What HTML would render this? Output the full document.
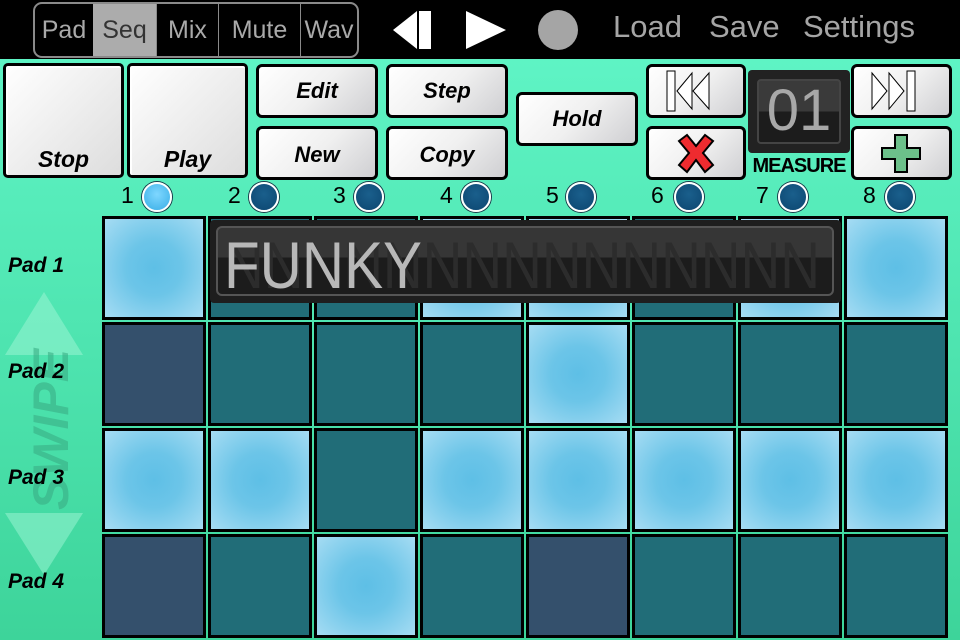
<!DOCTYPE html>
<html><head><meta charset="utf-8"><style>
*{margin:0;padding:0;box-sizing:border-box}
body{width:960px;height:640px;overflow:hidden;position:relative;font-family:"Liberation Sans",sans-serif;background:linear-gradient(#62f7c9,#3dd49a)}
.top{position:absolute;left:0;top:0;width:960px;height:59px;background:#000}
.seg{position:absolute;left:33px;top:2px;width:326px;height:56px;border:2px solid #8a8a8a;border-radius:9px;overflow:hidden;display:flex}
.seg div{color:#a9a9a9;font-size:25px;line-height:52px;text-align:center;border-left:1px solid #8a8a8a}
.seg div:first-child{border-left:none}
.tl{position:absolute;top:9px;color:#a5a5a5;font-size:31px}
.btn{position:absolute;border:3px solid #000;border-radius:6px;background:linear-gradient(135deg,#fff 0%,#f0f0f0 50%,#cfcfd2 100%);font-weight:bold;font-style:italic;font-size:22px;text-align:center;color:#000}
.big{border-radius:5px;background:linear-gradient(135deg,#fff,#ddd);border:3px solid #000;box-shadow:inset 2px 2px 0 #fff;font-size:23px}
.num{position:absolute;top:182px;font-size:23px;color:#000}
.dot{position:absolute;top:182px;width:30px;height:30px;border-radius:50%;border:2px solid #fff;background:radial-gradient(circle at 50% 40%,#1a5f8c,#0c4670);box-shadow:0 0 0 1px #1a3a4a}
.cell{position:absolute;width:104px;height:104px;border:3px solid #000}
.L{background:radial-gradient(circle,#5ebfe6 0%,#6cc5e8 40%,#a6dcf3 100%)}
.T{background:#216d78}
.N{background:#34506c}
.pl{position:absolute;left:8px;font-weight:bold;font-style:italic;font-size:21px}
</style></head><body>
<div class="top"></div>
<div class="seg">
<div style="width:58px">Pad</div>
<div style="width:63px;background:#acacac;color:#333;border-left:none">Seq</div>
<div style="width:62px">Mix</div>
<div style="width:82px">Mute</div>
<div style="width:57px">Wav</div>
</div>
<svg style="position:absolute;left:390px;top:8px" width="200" height="44">
<polygon points="3,22 27,3 27,41" fill="#fff"/><rect x="29" y="3" width="12" height="38" fill="#fff"/>
<polygon points="76,3 116,22 76,41" fill="#fff"/>
<circle cx="168" cy="22" r="20" fill="#a5a5a5"/>
</svg>
<div class="tl" style="left:613px">Load</div>
<div class="tl" style="left:709px">Save</div>
<div class="tl" style="left:803px">Settings</div>

<div class="btn big" style="left:3px;top:63px;width:121px;height:115px"><div style="position:absolute;bottom:2px;width:100%">Stop</div></div>
<div class="btn big" style="left:127px;top:63px;width:121px;height:115px"><div style="position:absolute;bottom:2px;width:100%">Play</div></div>
<div class="btn" style="left:256px;top:64px;width:122px;height:54px;line-height:48px">Edit</div>
<div class="btn" style="left:256px;top:126px;width:122px;height:54px;line-height:52px">New</div>
<div class="btn" style="left:386px;top:64px;width:122px;height:54px;line-height:48px">Step</div>
<div class="btn" style="left:386px;top:126px;width:122px;height:54px;line-height:52px">Copy</div>
<div class="btn" style="left:516px;top:92px;width:122px;height:54px;line-height:48px">Hold</div>
<div class="btn" style="left:646px;top:64px;width:100px;height:54px">
<svg width="94" height="48"><rect x="18" y="4" width="8" height="40" fill="#fff" stroke="#000" stroke-width="1"/><polygon points="28,24 43,6 43,42" fill="#fff" stroke="#000"/><polygon points="44,24 60,6 60,42" fill="#fff" stroke="#000"/></svg></div>
<div class="btn" style="left:646px;top:126px;width:100px;height:54px">
<svg width="94" height="48"><path d="M30 12 L38 6 L47 17 L56 6 L64 12 L54 24 L64 36 L56 43 L47 31 L38 43 L30 36 L40 24 Z" fill="#ee2b2f" stroke="#000" stroke-width="2"/></svg></div>
<div class="btn" style="left:851px;top:64px;width:101px;height:54px">
<svg width="95" height="48"><polygon points="18,6 33,24 18,42" fill="#fff" stroke="#000"/><polygon points="35,6 50,24 35,42" fill="#fff" stroke="#000"/><rect x="53" y="4" width="8" height="40" fill="#fff" stroke="#000"/></svg></div>
<div class="btn" style="left:851px;top:126px;width:101px;height:54px">
<svg width="95" height="48"><path d="M41 6 H53 V19 H66 V30 H53 V43 H41 V30 H28 V19 H41 Z" fill="#6cc08a" stroke="#000" stroke-width="2"/></svg></div>
<div style="position:absolute;left:748px;top:70px;width:102px;height:83px;background:#222;border-radius:4px">
<div style="position:absolute;left:9px;top:9px;width:84px;height:65px;border:2px solid #444;border-radius:4px;background:linear-gradient(#3a3a3a 50%,#1c1c1c 50%);color:#a8a8a8;font-size:58px;line-height:60px;text-align:center;font-family:'Liberation Sans',sans-serif;letter-spacing:0px">01</div></div>
<div style="position:absolute;left:747px;top:155px;width:104px;text-align:center;font-size:20px;font-weight:bold;letter-spacing:-1px">MEASURE</div>

<div class="num" style="left:121px">1</div><div class="dot" style="left:142px;background:radial-gradient(circle at 50% 40%,#7fd7ff,#38aee6)"></div>
<div class="num" style="left:228px">2</div><div class="dot" style="left:249px"></div>
<div class="num" style="left:333px">3</div><div class="dot" style="left:354px"></div>
<div class="num" style="left:440px">4</div><div class="dot" style="left:461px"></div>
<div class="num" style="left:546px">5</div><div class="dot" style="left:566px"></div>
<div class="num" style="left:651px">6</div><div class="dot" style="left:674px"></div>
<div class="num" style="left:756px">7</div><div class="dot" style="left:778px"></div>
<div class="num" style="left:863px">8</div><div class="dot" style="left:885px"></div>

<div id="g"></div>
<svg style="position:absolute;left:0;top:285px" width="100" height="300">
<polygon points="44,7 83,70 5,70" fill="#9ff5d5" opacity="0.5"/>
<polygon points="5,228 83,228 44,290" fill="#9ff5d5" opacity="0.5"/>
<text transform="translate(68,225) rotate(-90)" font-family="Liberation Sans" font-weight="bold" font-style="italic" font-size="50" fill="#3aaf86" opacity="0.6">SWIPE</text>
</svg>
<div class="pl" style="top:254px">Pad 1</div>
<div class="pl" style="top:360px">Pad 2</div>
<div class="pl" style="top:466px">Pad 3</div>
<div class="pl" style="top:570px">Pad 4</div>

<div style="position:absolute;left:210px;top:220px;width:631px;height:83px;background:#1e1e1e;border-radius:4px">
<div style="position:absolute;left:6px;top:6px;width:618px;height:70px;border:2px solid #555;border-radius:6px;background:linear-gradient(#363636 45%,#1c1c1c 45%);overflow:hidden">
<svg width="618" height="70"><text x="6" y="60" font-family="Liberation Sans" font-size="66" fill="#2c2c2c" textLength="596" lengthAdjust="spacingAndGlyphs">NNNNNNNNNNNNNNN</text><text x="6" y="60" font-family="Liberation Sans" font-size="66" fill="#b8b8b8" textLength="198" lengthAdjust="spacingAndGlyphs">FUNKY</text></svg>
</div></div>
<script>
var rows=["LTTLLTLL","NTTTLTTT","LLTLLLLL","NTLTNTTT"];
var h="";
for(var r=0;r<4;r++)for(var c=0;c<8;c++){h+='<div class="cell '+rows[r][c]+'" style="left:'+(102+106*c)+'px;top:'+(216+106*r)+'px"></div>';}
document.getElementById('g').innerHTML=h;
</script>
</body></html>
